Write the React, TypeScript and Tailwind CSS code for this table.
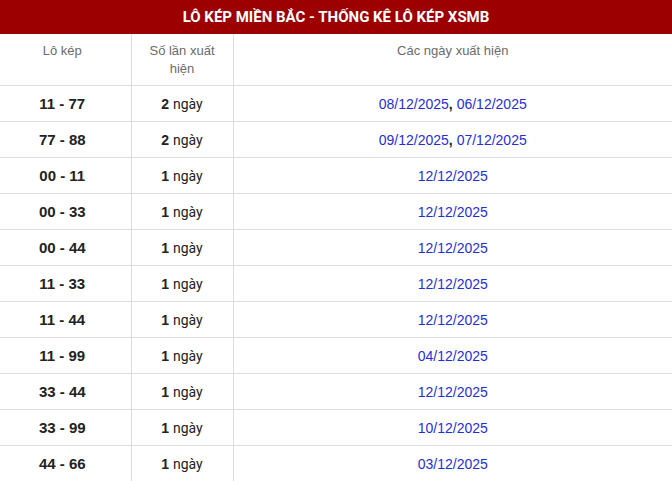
const rows: [string, number, string[]][] = [
  ['11 - 77', 2, ['08/12/2025', '06/12/2025']],
  ['77 - 88', 2, ['09/12/2025', '07/12/2025']],
  ['00 - 11', 1, ['12/12/2025']],
  ['00 - 33', 1, ['12/12/2025']],
  ['00 - 44', 1, ['12/12/2025']],
  ['11 - 33', 1, ['12/12/2025']],
  ['11 - 44', 1, ['12/12/2025']],
  ['11 - 99', 1, ['04/12/2025']],
  ['33 - 44', 1, ['12/12/2025']],
  ['33 - 99', 1, ['10/12/2025']],
  ['44 - 66', 1, ['03/12/2025']],
];

export default function App() {
  return (
    <div className="w-[672px] bg-white font-['Liberation_Sans',Arial,sans-serif]">
      <div className="h-[34px] bg-[#9c0000] flex items-center justify-center text-white font-bold text-[15px] font-['Roboto',sans-serif]">
        LÔ KÉP MIỀN BẮC - THỐNG KÊ LÔ KÉP XSMB
      </div>
      <table className="w-full border-collapse table-fixed">
        <colgroup>
          <col className="w-[131px]" />
          <col className="w-[102px]" />
          <col />
        </colgroup>
        <thead>
          <tr className="h-[51px] text-[13px] text-[#6b6b6b]">
            <th className="font-normal align-top pt-[8px] pr-[6px] leading-[18px] border-b border-r border-[#ddd]">Lô kép</th>
            <th className="font-normal align-top pt-[8px] px-3 leading-[18px] border-b border-r border-[#ddd]">Số lần xuất hiện</th>
            <th className="font-normal align-top pt-[8px] leading-[18px] border-b border-[#ddd]">Các ngày xuất hiện</th>
          </tr>
        </thead>
        <tbody>
          {rows.map(([pair, n, dates]) => (
            <tr key={pair} className="h-[36px] text-[14px]">
              <td className="text-center pt-[2px] pr-[6px] font-bold text-[15px] text-[#222] border-b border-r border-[#ddd]">{pair}</td>
              <td className="text-center pt-[2px] text-[#222] border-b border-r border-[#ddd]">
                <b>{n}</b> <span className="font-['Roboto',sans-serif]">ngày</span>
              </td>
              <td className="text-center pt-[2px] text-[#1f2fe0] border-b border-[#ddd]">
                {dates.map((d, i) => (
                  <span key={d}>
                    {i > 0 && <b className="text-[#222]">, </b>}
                    {d}
                  </span>
                ))}
              </td>
            </tr>
          ))}
        </tbody>
      </table>
    </div>
  );
}
